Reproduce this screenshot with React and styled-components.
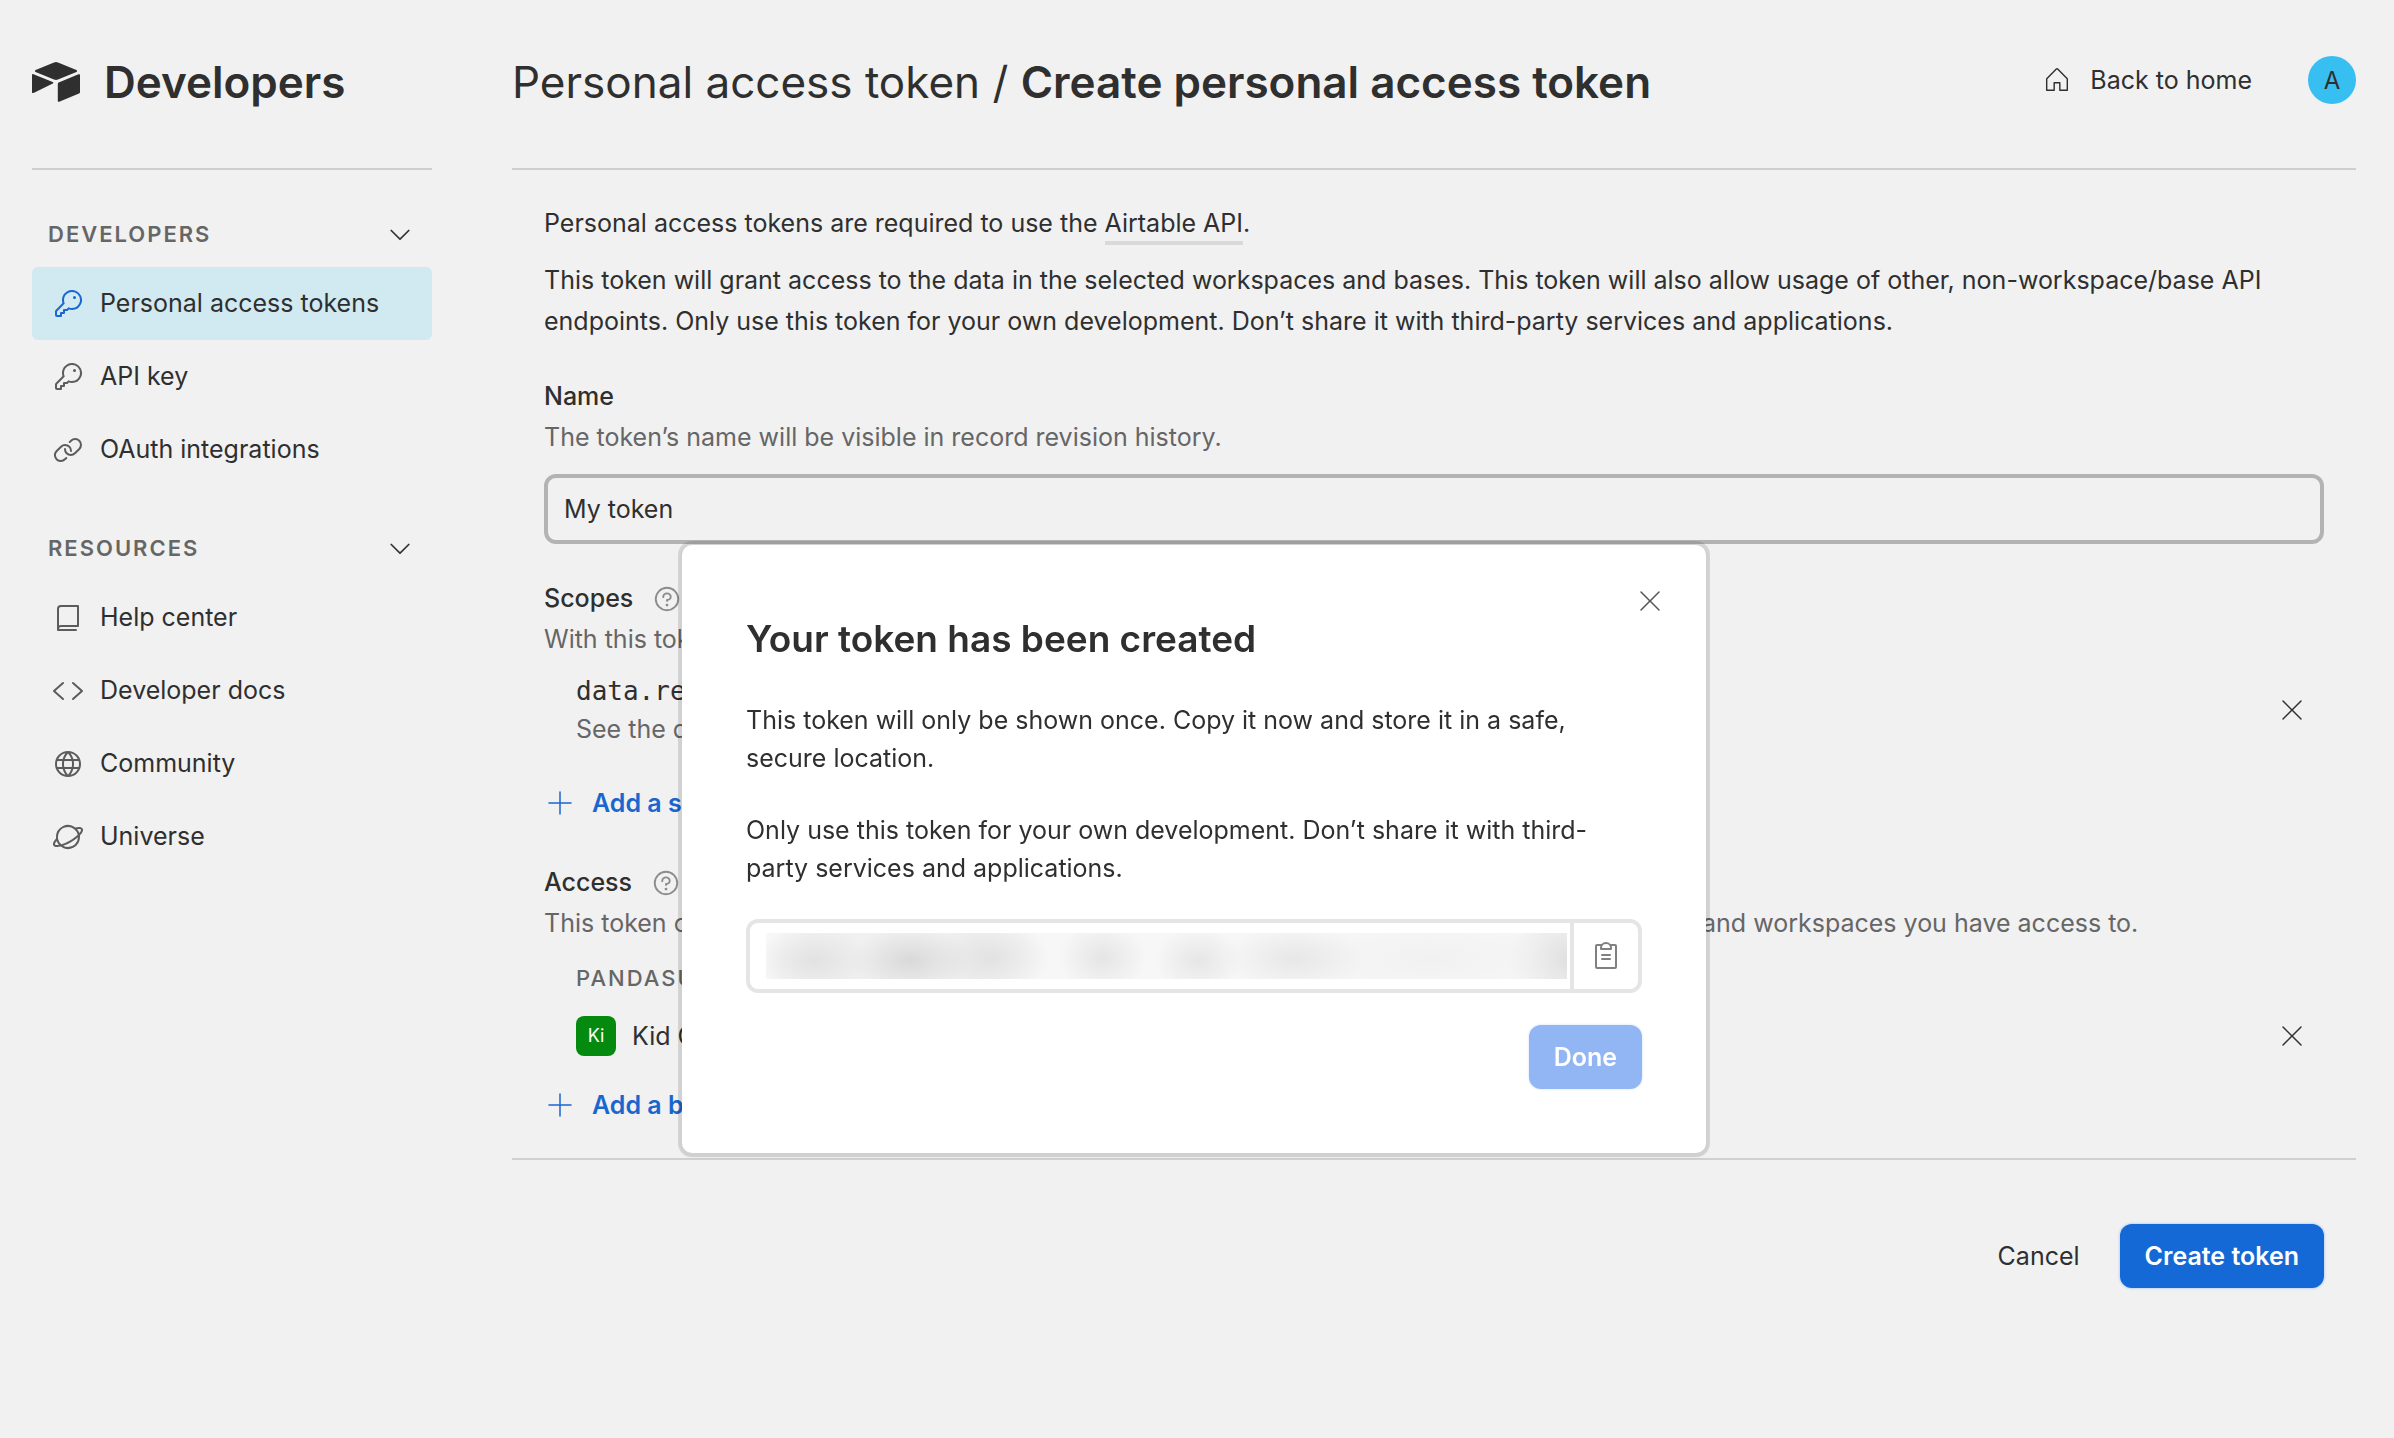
import React, { useState } from "react";
import styled, { createGlobalStyle } from "styled-components";
import {
  PiBook,
  PiCaretDown,
  PiClipboardText,
  PiCodeSimple,
  PiGlobe,
  PiHouseLight,
  PiKey,
  PiLink,
  PiPlanet,
  PiPlusLight,
  PiQuestion,
  PiXLight,
} from "react-icons/pi";

const navGroups = [
  {
    title: "Developers",
    items: [
      { label: "Personal access tokens", icon: PiKey, active: true },
      { label: "API key", icon: PiKey },
      { label: "OAuth integrations", icon: PiLink },
    ],
  },
  {
    title: "Resources",
    items: [
      { label: "Help center", icon: PiBook },
      { label: "Developer docs", icon: PiCodeSimple },
      { label: "Community", icon: PiGlobe },
      { label: "Universe", icon: PiPlanet },
    ],
  },
];

const Logo = () => (
  <svg width="48" height="40" viewBox="0 0 48 40" fill="currentColor" aria-hidden="true">
    <path d="M22 .5a5 5 0 0 1 4 0l18.400 7.500c1 .4 1 1.600 0 2l-18.400 7.500a5 5 0 0 1-4 0L3.600 10c-1-.4-1-1.600 0-2z" />
    <path d="M0 13.200c0-.9.700-1.300 1.500-1l19.200 7.700c.9.400.9 1.300.1 1.700L1.500 31c-.8.300-1.500 0-1.500-.8z" />
    <path d="M25.800 21.900c0-.6.300-1 .9-1.300l19.800-8.300c.8-.3 1.500.1 1.500.9v17c0 .6-.4 1-1 1.300l-19.800 8.200c-.8.300-1.400 0-1.400-.8z" />
  </svg>
);

function Sidebar() {
  return (
    <SideBar>
      <Header>
        <Brand>
          <Logo />
          Developers
        </Brand>
      </Header>
      <Nav>
        {navGroups.map((group) => (
          <section key={group.title}>
            <NavToggle type="button" aria-expanded="true">
              {group.title}
              <PiCaretDown size={28} />
            </NavToggle>
            <NavList>
              {group.items.map(({ label, icon: Icon, active }) => (
                <li key={label}>
                  <NavLink href="#" $active={active}>
                    <Icon size={32} />
                    <span>{label}</span>
                  </NavLink>
                </li>
              ))}
            </NavList>
          </section>
        ))}
      </Nav>
    </SideBar>
  );
}

function TokenDialog() {
  return (
    <Overlay>
      <Dialog role="dialog" aria-labelledby="dialog-title">
        <CloseButton type="button" aria-label="Close">
          <PiXLight size={32} />
        </CloseButton>
        <DialogTitle id="dialog-title">Your token has been created</DialogTitle>
        <DialogText>
          This token will only be shown once. Copy it now and store it in a safe, secure location.
        </DialogText>
        <DialogText>
          Only use this token for your own development. Don’t share it with third-party services and
          applications.
        </DialogText>
        <TokenField>
          <TokenInput aria-label="Token" readOnly />
          <CopyButton type="button" aria-label="Copy token">
            <PiClipboardText size={32} />
          </CopyButton>
        </TokenField>
        <DialogActions>
          <PrimaryButton type="button" $muted>Done</PrimaryButton>
        </DialogActions>
      </Dialog>
    </Overlay>
  );
}

export default function App() {
  const [name, setName] = useState("My token");

  return (
    <Page>
      <GlobalStyle />
      <Sidebar />
      <Main>
        <Header>
          <Breadcrumb>
            Personal access token / <strong>Create personal access token</strong>
          </Breadcrumb>
          <Account>
            <HomeLink href="#">
              <PiHouseLight size={30} />
              Back to home
            </HomeLink>
            <Avatar type="button">A</Avatar>
          </Account>
        </Header>

        <Content>
          <Intro>
            Personal access tokens are required to use the <TextLink href="#">Airtable API</TextLink>.
          </Intro>
          <Intro>
            This token will grant access to the data in the selected workspaces and bases. This token
            will also allow usage of other, non-workspace/base API endpoints. Only use this token for
            your own development. Don’t share it with third-party services and applications.
          </Intro>

          <Section>
            <Label htmlFor="token-name">Name</Label>
            <Hint>The token’s name will be visible in record revision history.</Hint>
            <NameInput id="token-name" value={name} onChange={(e) => setName(e.target.value)} />
          </Section>

          <Section>
            <SectionHead>
              <SectionTitle>Scopes</SectionTitle>
              <IconButton type="button" aria-label="About scopes" $color="#8c8c8c">
                <PiQuestion size={30} />
              </IconButton>
            </SectionHead>
            <Hint>With this token:</Hint>
            <ScopeRow>
              <div>
                <ScopeName>data.records:read</ScopeName>
                <ScopeHint>See the data</ScopeHint>
              </div>
              <IconButton type="button" aria-label="Remove scope">
                <PiXLight size={32} />
              </IconButton>
            </ScopeRow>
            <AddButton type="button">
              <PiPlusLight size={32} />
              Add a scope
            </AddButton>
          </Section>

          <Section>
            <SectionHead>
              <SectionTitle>Access</SectionTitle>
              <IconButton type="button" aria-label="About access" $color="#8c8c8c">
                <PiQuestion size={30} />
              </IconButton>
            </SectionHead>
            <Hint>
              This token can only read and write data in the following set of resources. Add any
              available bases and workspaces you have access to.
            </Hint>
            <Workspace>Pandasuite</Workspace>
            <BaseRow>
              <BaseName>
                <BaseIcon>Ki</BaseIcon>
                Kid Content
              </BaseName>
              <IconButton type="button" aria-label="Remove base">
                <PiXLight size={32} />
              </IconButton>
            </BaseRow>
            <AddButton type="button">
              <PiPlusLight size={32} />
              Add a base
            </AddButton>
          </Section>
        </Content>

        <Footer>
          <CancelButton type="button">Cancel</CancelButton>
          <PrimaryButton type="button">Create token</PrimaryButton>
        </Footer>
      </Main>
      <TokenDialog />
    </Page>
  );
}

const GlobalStyle = createGlobalStyle`
  * {
    box-sizing: border-box;
  }
  body {
    margin: 0;
    background: #f1f1f1;
    color: #2f2f2f;
    font-family: Inter, sans-serif;
    font-size: 25px;
    line-height: 41px;
  }
  h1, h2, h3, p, ul {
    margin: 0;
    padding: 0;
  }
  button, input {
    font: inherit;
    color: inherit;
    border: none;
    padding: 0;
    background: none;
  }
  a {
    color: inherit;
    text-decoration: none;
  }
  svg {
    display: block;
    flex: none;
  }
`;

const Page = styled.div`
  display: flex;
  gap: 80px;
  min-height: 100vh;
  padding: 0 38px 0 32px;
`;

const SideBar = styled.aside`
  flex: none;
  width: 400px;
`;

const Main = styled.main`
  flex: 1;
  min-width: 0;
`;

const Header = styled.header`
  display: flex;
  align-items: center;
  justify-content: space-between;
  height: 170px;
  padding-bottom: 4px;
  border-bottom: 2px solid #cfcfcf;
`;

const Brand = styled.div`
  display: flex;
  align-items: center;
  gap: 24px;
  font-size: 44px;
  font-weight: 600;
`;

const Nav = styled.nav`
  display: flex;
  flex-direction: column;
  gap: 46px;
  padding-top: 48px;
`;

const NavToggle = styled.button`
  display: flex;
  align-items: center;
  justify-content: space-between;
  width: 100%;
  padding: 0 18px 0 16px;
  margin-bottom: 17px;
  font-size: 22px;
  font-weight: 600;
  line-height: 32px;
  letter-spacing: 2px;
  text-transform: uppercase;
  color: #666;

  svg {
    color: #333;
  }
`;

const NavList = styled.ul`
  list-style: none;
`;

const NavLink = styled.a`
  display: flex;
  align-items: center;
  gap: 16px;
  height: 73px;
  padding: 0 20px;
  border-radius: 6px;
  background: ${(p) => (p.$active ? "#d1e9f0" : "transparent")};

  svg {
    color: ${(p) => (p.$active ? "#1a66d6" : "#5c5c5c")};
  }
`;

const Breadcrumb = styled.h1`
  font-size: 44px;
  font-weight: 400;

  strong {
    font-weight: 600;
  }
`;

const Account = styled.div`
  display: flex;
  align-items: center;
  gap: 56px;
  padding-bottom: 4px;
`;

const HomeLink = styled.a`
  display: flex;
  align-items: center;
  gap: 18px;
`;

const Avatar = styled.button`
  width: 48px;
  height: 48px;
  border-radius: 50%;
  background: #38bff1;
  font-size: 24px;
`;

const Content = styled.div`
  padding: 33px 32px 28px;
  border-bottom: 2px solid #d0d0d0;
`;

const Intro = styled.p`
  & + & {
    margin-top: 16px;
  }
`;

const TextLink = styled.a`
  padding-bottom: 3px;
  border-bottom: 4px solid #d9d9d9;
`;

const Section = styled.section`
  margin-top: 34px;
`;

const Label = styled.label`
  display: block;
  font-weight: 500;
`;

const SectionHead = styled.div`
  display: flex;
  align-items: center;
  gap: 19px;
`;

const SectionTitle = styled.h2`
  font-size: 25px;
  font-weight: 500;
`;

const Hint = styled.p`
  color: #666;
`;

const NameInput = styled.input`
  display: block;
  width: 100%;
  height: 70px;
  margin-top: 16px;
  padding: 0 16px;
  border: 4px solid #b3b3b3;
  border-radius: 12px;
`;

const IconButton = styled.button`
  display: flex;
  color: ${(p) => p.$color || "#333"};
`;

const ScopeRow = styled.div`
  display: flex;
  align-items: center;
  justify-content: space-between;
  margin: 12px 0 30px;
  padding: 0 16px 0 32px;
  line-height: 38px;
`;

const ScopeName = styled.div`
  font-family: "DejaVu Sans Mono", monospace;
  font-size: 26px;
`;

const ScopeHint = styled.div`
  color: #666;
`;

const AddButton = styled.button`
  display: flex;
  align-items: center;
  gap: 16px;
  height: 50px;
  font-weight: 600;
  color: #1b66ce;
`;

const Workspace = styled.h3`
  margin-top: 18px;
  padding-left: 32px;
  font-size: 22px;
  font-weight: 500;
  line-height: 32px;
  letter-spacing: 2px;
  text-transform: uppercase;
  color: #666;
`;

const BaseRow = styled.div`
  display: flex;
  align-items: center;
  justify-content: space-between;
  margin: 22px 0 24px;
  padding: 0 16px 0 32px;
  line-height: 40px;
`;

const BaseName = styled.div`
  display: flex;
  align-items: center;
  gap: 16px;
`;

const BaseIcon = styled.span`
  width: 40px;
  height: 40px;
  border-radius: 8px;
  background: #048a0e;
  color: #fff;
  font-size: 18px;
  text-align: center;
`;

const Footer = styled.footer`
  display: flex;
  justify-content: flex-end;
  gap: 40px;
  padding: 64px 32px;
`;

const CancelButton = styled.button`
  height: 64px;
`;

const PrimaryButton = styled.button`
  height: 64px;
  padding: 0 25px;
  border-radius: 12px;
  background: ${(p) => (p.$muted ? "#92b5f3" : "#1469d6")};
  box-shadow: 0 0 3px ${(p) => (p.$muted ? "#cfe0fb" : "#8fb9f0")};
  color: #fff;
  font-weight: 600;
`;

const Overlay = styled.div`
  position: fixed;
  inset: 0;
  display: flex;
  align-items: center;
  justify-content: center;
  padding: 260px 6px 0 0;
`;

const Dialog = styled.div`
  position: relative;
  width: 1024px;
  padding: 64px;
  border-radius: 10px;
  background: #fff;
  box-shadow: 0 0 0 4px rgba(0, 0, 0, 0.11), 0 2px 3px 3px rgba(0, 0, 0, 0.03);
`;

const CloseButton = styled.button`
  position: absolute;
  top: 40px;
  right: 40px;
  color: #555;
`;

const DialogTitle = styled.h2`
  margin-bottom: 32px;
  font-size: 37px;
  font-weight: 600;
  line-height: 60px;
`;

const DialogText = styled.p`
  max-width: 880px;
  line-height: 38px;

  & + & {
    margin-top: 34px;
  }
`;

const TokenField = styled.div`
  display: flex;
  height: 74px;
  margin: 32px 0;
  border: 4px solid #e5e5e5;
  border-radius: 12px;
`;

const TokenInput = styled.input`
  flex: 1;
  min-width: 0;
  padding: 10px 3px 10px 16px;
  background-color: #f7f7f7;
  background-image:
    radial-gradient(60px 34px at 6% 60%, #e2e2e2, transparent),
    radial-gradient(60px 34px at 18% 60%, #d9d9d9, transparent),
    radial-gradient(60px 38px at 28% 54%, #e2e2e2, transparent),
    radial-gradient(44px 36px at 42% 54%, #e5e5e5, transparent),
    radial-gradient(44px 34px at 54% 60%, #e6e6e6, transparent),
    radial-gradient(70px 34px at 66% 56%, #e7e7e7, transparent),
    radial-gradient(140px 40px at 83% 56%, #f1f1f1, transparent),
    radial-gradient(60px 50px at 100% 56%, #dfdfdf, transparent),
    linear-gradient(90deg, #f8f8f8, #f1f1f1 6%, #f1f1f1 26%, #f7f7f7 34%);
  background-origin: content-box;
  background-clip: content-box;
`;

const CopyButton = styled.button`
  display: flex;
  align-items: center;
  justify-content: center;
  width: 68px;
  border-left: 4px solid #e5e5e5;
  color: #808080;
`;

const DialogActions = styled.div`
  display: flex;
  justify-content: flex-end;
`;
